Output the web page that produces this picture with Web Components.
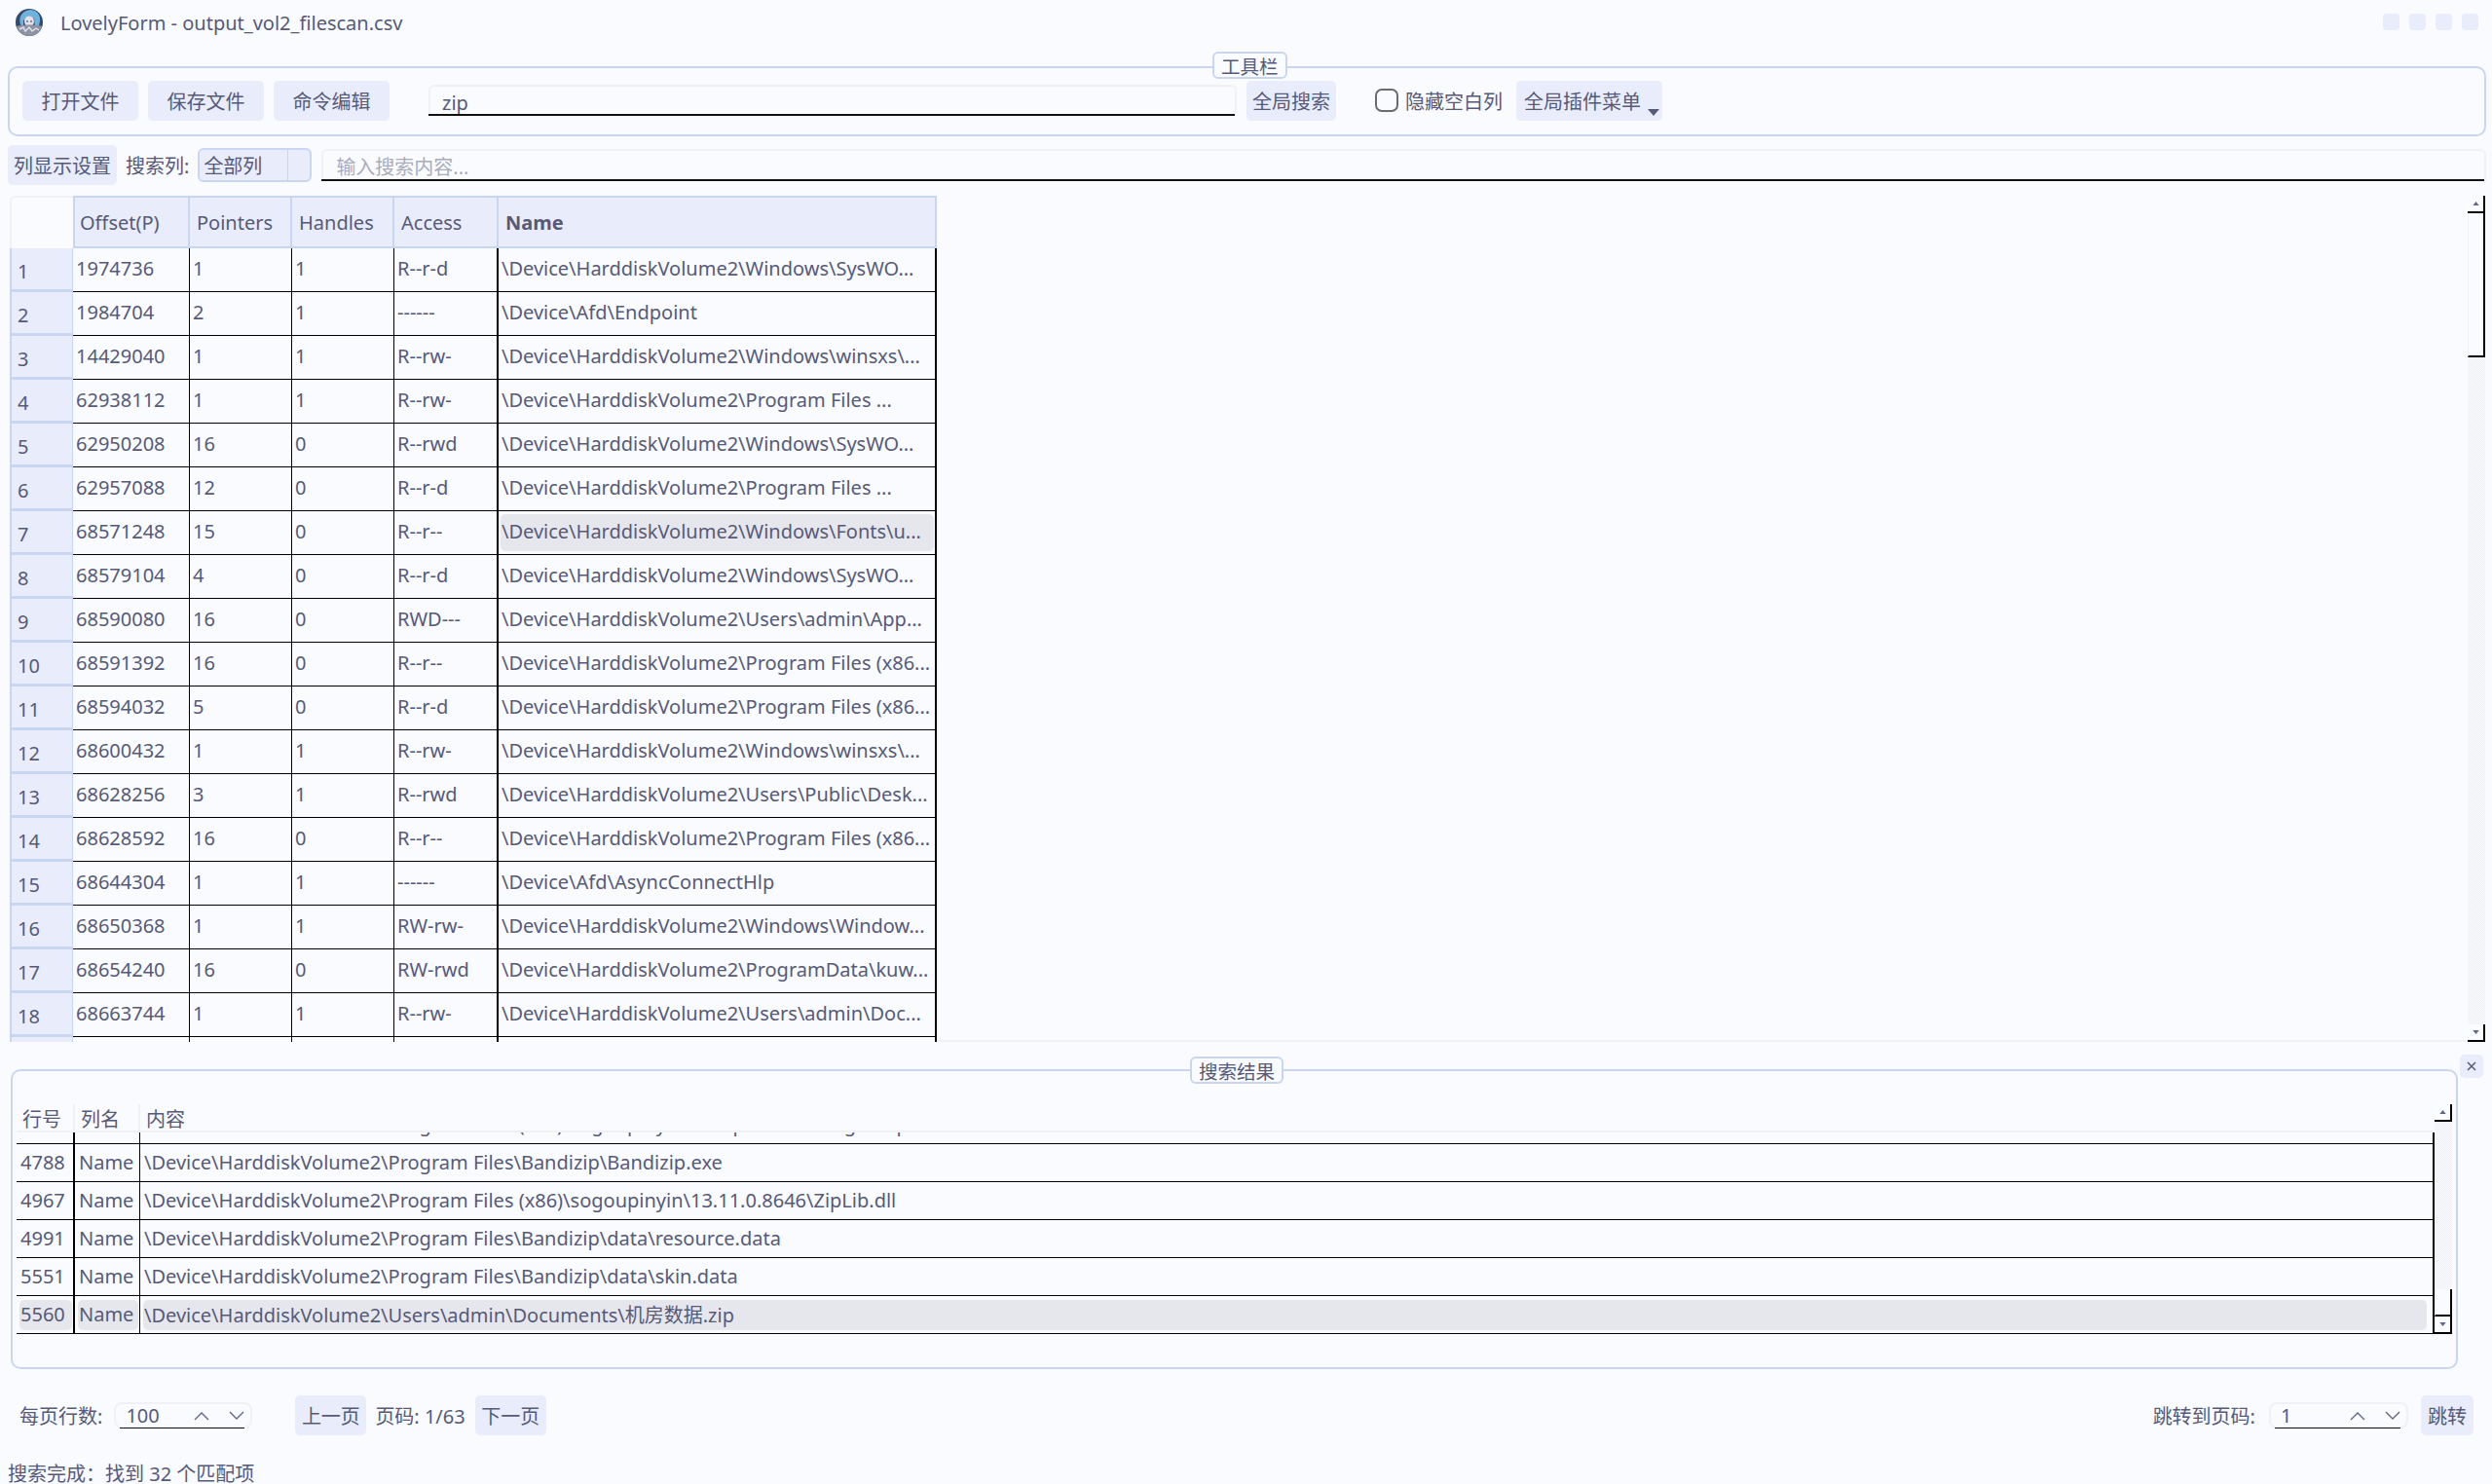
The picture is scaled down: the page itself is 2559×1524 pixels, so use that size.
<!DOCTYPE html>
<html lang="zh">
<head>
<meta charset="utf-8">
<title>LovelyForm</title>
<style>
  html, body { margin: 0; height: 100%; background: #f9fbff; overflow: hidden; }
  body { font: 20px "Noto Sans", "Noto Sans CJK SC", sans-serif; color: #565a78; }
  lf-app { height: 100vh; }
</style>
</head>
<body>
<lf-app></lf-app>
<script>
// datos de la tabla principal
const H = '\\Device\\HarddiskVolume2\\';
const FILAS = [
  ['1974736','1','1','R--r-d',H+'Windows\\SysWO...'],
  ['1984704','2','1','------','\\Device\\Afd\\Endpoint'],
  ['14429040','1','1','R--rw-',H+'Windows\\winsxs\\...'],
  ['62938112','1','1','R--rw-',H+'Program Files ...'],
  ['62950208','16','0','R--rwd',H+'Windows\\SysWO...'],
  ['62957088','12','0','R--r-d',H+'Program Files ...'],
  ['68571248','15','0','R--r--',H+'Windows\\Fonts\\u...'],
  ['68579104','4','0','R--r-d',H+'Windows\\SysWO...'],
  ['68590080','16','0','RWD---',H+'Users\\admin\\App...'],
  ['68591392','16','0','R--r--',H+'Program Files (x86...'],
  ['68594032','5','0','R--r-d',H+'Program Files (x86...'],
  ['68600432','1','1','R--rw-',H+'Windows\\winsxs\\...'],
  ['68628256','3','1','R--rwd',H+'Users\\Public\\Desk...'],
  ['68628592','16','0','R--r--',H+'Program Files (x86...'],
  ['68644304','1','1','------','\\Device\\Afd\\AsyncConnectHlp'],
  ['68650368','1','1','RW-rw-',H+'Windows\\Window...'],
  ['68654240','16','0','RW-rwd',H+'ProgramData\\kuw...'],
  ['68663744','1','1','R--rw-',H+'Users\\admin\\Doc...'],
  ['','','','','']
];
const RESULTADOS = [
  ['4621','Name',H+'Program Files (x86)\\sogoupinyin\\Components\\Plugin\\ZipLib.dll'],
  ['4788','Name',H+'Program Files\\Bandizip\\Bandizip.exe'],
  ['4967','Name',H+'Program Files (x86)\\sogoupinyin\\13.11.0.8646\\ZipLib.dll'],
  ['4991','Name',H+'Program Files\\Bandizip\\data\\resource.data'],
  ['5551','Name',H+'Program Files\\Bandizip\\data\\skin.data'],
  ['5560','Name',H+'Users\\admin\\Documents\\机房数据.zip']
];

const esc = s => s.replace(/&/g, '&amp;').replace(/</g, '&lt;');

class LfButton extends HTMLElement {
  constructor() {
    super();
    this.attachShadow({ mode: 'open' }).innerHTML = `
      <style>
        :host { display: inline-flex; align-items: center; justify-content: center; box-sizing: border-box;
                height: 41px; background: #e9edfb; border-radius: 5px; white-space: nowrap; flex: none; }
      </style><slot></slot>`;
  }
}
customElements.define('lf-button', LfButton);

class LfInput extends HTMLElement {
  constructor() {
    super();
    const ph = this.getAttribute('placeholder') || '';
    this.attachShadow({ mode: 'open' }).innerHTML = `
      <style>
        :host { display: flex; align-items: center; box-sizing: border-box; min-width: 0;
                border: 2px solid #eff1f7; border-bottom: 0; border-radius: 6px 6px 0 0; position: relative; }
        span { flex: 1; white-space: nowrap; }
        .ph { color: #a9acbb; }
        i { position: absolute; left: -2px; right: 0; bottom: 0; height: 2px; background: #111; }
      </style><span class="${ph ? 'ph' : ''}">${ph || '<slot></slot>'}</span><i></i>`;
  }
}
customElements.define('lf-input', LfInput);

// cuadro con titulo encima del borde
class LfGroup extends HTMLElement {
  constructor() {
    super();
    const titulo = this.getAttribute('titulo');
    this.attachShadow({ mode: 'open' }).innerHTML = `
      <style>
        :host { display: block; box-sizing: border-box; position: relative;
                border: 2px solid #c9d6f1; border-radius: 10px; }
        .tag { position: absolute; top: var(--tag-top); left: var(--tag-x); height: 28px; padding: 0 7px;
               box-sizing: border-box; display: flex; align-items: center; background: #f9fbff;
               border: 2px solid #c9d6f1; border-radius: 6px; font-size: 19.5px; white-space: nowrap; }
      </style><div class="tag">${titulo}</div><slot></slot>`;
  }
}
customElements.define('lf-group', LfGroup);

// barra de desplazamiento estilo clasico
class LfScrollbar extends HTMLElement {
  constructor() {
    super();
    const thumbTop = +this.getAttribute('thumb-top');
    const thumbH = +this.getAttribute('thumb-height');
    const flecha = d => `<svg width="7" height="4" viewBox="0 0 8 5"><path d="${d}" fill="#62668a"/></svg>`;
    this.attachShadow({ mode: 'open' }).innerHTML = `
      <style>
        :host { display: flex; flex-direction: column; width: 18px; flex: none; box-sizing: border-box; }
        .btn { height: 18px; flex: none; box-sizing: border-box; display: flex; align-items: center; justify-content: center;
               border-right: 2px solid #000; border-bottom: 2px solid #000; background: #fbfcff; }
        .track { flex: 1; min-height: 0; display: flex; flex-direction: column;
                 background: repeating-conic-gradient(#eef0f6 0 25%, #f9fbff 0 50%) 0 0 / 2px 2px; }
        .thumb { margin-top: ${thumbTop}px; height: ${thumbH}px; box-sizing: border-box; background: #f9fbff;
                 border-right: 2px solid #000; border-bottom: 2px solid #000; border-left: 1px solid #f0f2f8; }
      </style>
      <div class="btn">${flecha('M4 0 L8 5 H0 Z')}</div>
      <div class="track"><div class="thumb"></div></div>
      <div class="btn">${flecha('M0 0 H8 L4 5 Z')}</div>`;
  }
}
customElements.define('lf-scrollbar', LfScrollbar);

class LfSpin extends HTMLElement {
  constructor() {
    super();
    this.attachShadow({ mode: 'open' }).innerHTML = `
      <style>
        :host { display: flex; align-items: center; box-sizing: border-box; height: 27px; flex: none; position: relative;
                border: 2px solid #eff1f7; border-radius: 8px; padding: 0 6px 0 10px; }
        span { flex: 1; }
        svg { width: 16px; height: 10px; fill: none; stroke: #62668a; stroke-width: 1.4; margin-left: 20px; }
        i { position: absolute; left: 4px; right: 6px; bottom: -2px; height: 1px; background: #111; }
      </style>
      <span><slot></slot></span>
      <svg viewBox="0 0 16 10"><path d="M1 9 L8 2 L15 9"/></svg>
      <svg viewBox="0 0 16 10"><path d="M1 1 L8 8 L15 1"/></svg>
      <i></i>`;
  }
}
customElements.define('lf-spin', LfSpin);

class LfTitlebar extends HTMLElement {
  constructor() {
    super();
    this.attachShadow({ mode: 'open' }).innerHTML = `
      <style>
        :host { display: flex; align-items: center; height: 46px; padding: 0 14px 0 15px; flex: none; }
        svg { width: 30px; height: 30px; flex: none; }
        .t { margin-left: 17px; flex: 1; white-space: nowrap; }
        .w { display: flex; gap: 10px; margin-bottom: 1px; }
        .w i { width: 17px; height: 17px; border-radius: 4px; background: #e9edfb; }
      </style>
      <svg viewBox="0 0 30 30">
        <circle cx="15" cy="15" r="14" fill="#34496b"/>
        <path d="M6 17 C3 6 12 2 17 2 C25 3 28 10 25 18 L21 20 L20 11 C16 9 12 10 9 13 L9 20 Z" fill="#6fb2dc"/>
        <ellipse cx="15" cy="14" rx="5" ry="5.5" fill="#eadfe4"/>
        <circle cx="13" cy="14" r="1" fill="#3f78b0"/><circle cx="17" cy="14" r="1" fill="#3f78b0"/>
        <path d="M2 19 C8 17 22 17 28 19 C26 26 20 29 15 29 C10 29 4 26 2 19 Z" fill="#8d93a3"/>
        <path d="M5 22 L9 20 L11 24 L15 20 L18 24 L22 21 L25 23" fill="none" stroke="#dfe3ea" stroke-width="1.4"/>
      </svg>
      <div class="t"><slot></slot></div>
      <div class="w"><i></i><i></i><i></i><i></i></div>`;
  }
}
customElements.define('lf-titlebar', LfTitlebar);

class LfTable extends HTMLElement {
  constructor() {
    super();
    const cabecera = ['Offset(P)','Pointers','Handles','Access','Name'];
    const cab = cabecera.map((c, i) => `<div class="hd${i === 4 ? ' b' : ''}">${c}</div>`).join('');
    const filas = FILAS.map((f, n) => `
      <div class="rh">${f[0] ? n + 1 : ''}</div>
      ${f.map((v, i) => `<div class="c${i >= 3 ? ' g2' : ''}"><span class="${n === 6 && i === 4 ? 'sel' : ''}">${esc(v)}</span></div>`).join('')}`).join('');
    this.attachShadow({ mode: 'open' }).innerHTML = `
      <style>
        :host { display: block; overflow: hidden; flex: 1; min-width: 0; }
        .g { display: grid; grid-template-columns: 65px 120px 105px 105px 107px 450px; grid-template-rows: 54px; grid-auto-rows: 45px; width: max-content; }
        .corner { border: 2px solid #eff1f7; border-right: 0; border-bottom: 0; border-radius: 6px 0 0 0; }
        .hd { box-sizing: border-box; background: #e9edfb; display: flex; align-items: center; padding: 0 0 0 7px;
              border: 2px solid #c9d6f1; border-left: 0; white-space: nowrap; }
        .hd:nth-child(2) { border-left: 2px solid #c9d6f1; padding-left: 5px; }
        .b { font-weight: 700; }
        .rh { box-sizing: border-box; background: #e9edfb; border-left: 2px solid #c9d6f1; border-bottom: 3px solid #c9d6f1;
              border-right: 1px solid #c9d6f1; padding: 5px 0 0 6px; display: flex; align-items: center; }
        .c { box-sizing: border-box; border-right: 1px solid #000; border-bottom: 1px solid #000; display: flex; padding: 3px 1px 3px 2px; min-width: 0; }
        .g2 { border-right-width: 2px; }
        .c span { flex: 1; display: flex; align-items: center; padding: 0 0 4px 1px; border-radius: 5px; white-space: nowrap; overflow: hidden; }
        .c span.sel { background: #e6e7ec; }
      </style>
      <div class="g"><div class="corner"></div>${cab}${filas}</div>`;
  }
}
customElements.define('lf-table', LfTable);

class LfResults extends HTMLElement {
  constructor() {
    super();
    const filas = RESULTADOS.map((f, n) => f.map(v =>
      `<div class="c"><span class="${n === 5 ? 'sel' : ''}">${esc(v)}</span></div>`).join('')).join('');
    this.attachShadow({ mode: 'open' }).innerHTML = `
      <style>
        :host { display: flex; flex-direction: column; flex: 1; min-width: 0; height: 236px; }
        .head, .rows { display: grid; grid-template-columns: 60px 67px 1fr; }
        .head { height: 29px; box-sizing: border-box; border-bottom: 2px solid #eff1f7; }
        .head div { padding: 0 0 0 6px; display: flex; align-items: center; border-right: 2px solid #eff1f7; }
        .head div:last-child { border-right: 0; }
        .scroll { flex: 1; min-height: 0; overflow: hidden; border-right: 2px solid #000; }
        .rows { grid-auto-rows: 39px; margin-top: -27px; }
        .c { box-sizing: border-box; border-bottom: 1px solid #000; border-right: 1px solid #000; display: flex; padding: 4px 1px 3px 3px; min-width: 0; }
        .c:nth-child(3n+1) { border-right-width: 2px; }
        .c:nth-child(3n) { border-right: 0; padding-right: 6px; }
        .c span { flex: 1; display: flex; align-items: center; padding: 0 0 2px 1px; border-radius: 5px; white-space: nowrap; }
        .c span.sel { background: #e6e7ec; }
      </style>
      <div class="head"><div>行号</div><div>列名</div><div>内容</div></div>
      <div class="scroll"><div class="rows">${filas}</div></div>`;
  }
}
customElements.define('lf-results', LfResults);

class LfApp extends HTMLElement {
  constructor() {
    super();
    this.attachShadow({ mode: 'open' }).innerHTML = `
      <style>
        :host { display: flex; flex-direction: column; box-sizing: border-box; height: 100%; }
        lf-group.tool { margin: 22px 6px 0 8px; height: 72px; --tag-x: 1235px; --tag-top: -17px; }
        .toolrow { display: flex; align-items: center; height: 100%; padding: 0 0 0 13px; margin-top: -1px; }
        .toolrow lf-button { margin-right: 10px; }
        .b119 { width: 119px; }
        .search { flex: none; width: 830px; height: 32px; margin: 0 10px 0 40px; padding: 2px 0 0 12px; }
        .check { display: flex; align-items: center; margin-left: 40px; width: 145px; white-space: nowrap; flex: none; }
        .check input { appearance: none; width: 24px; height: 24px; margin: 0 7px 0 0; border: 2px solid #6b6b6b; border-radius: 7px; flex: none; }
        .menu { width: 150px; justify-content: flex-start; padding-left: 8px; position: relative; }
        .menu svg { position: absolute; right: 3px; bottom: 5px; }
        .row2 { display: flex; align-items: center; height: 41px; margin: 9px 6px 0 8px; flex: none; }
        .combo { width: 117px; height: 35px; box-sizing: border-box; margin: 0 10px 0 9px; flex: none; background: #e9edfb;
                 border: 2px solid #c9d6f1; border-radius: 6px; display: flex; align-items: center; padding-left: 4px; position: relative; }
        .combo i { position: absolute; right: 22px; top: 0; bottom: 0; width: 1px; background: #c9d6f1; }
        .filter { flex: 1; height: 33px; padding-left: 13px; }
        .tabla { display: flex; flex: none; height: 869px; margin: 11px 7px 0 10px; }
        .sep { height: 2px; flex: none; margin: -2px 25px 0 962px; background: #eff1f7; }
        .res { display: flex; align-items: flex-start; flex: none; padding: 13px 9px 0 11px; }
        lf-group.rg { flex: 1; height: 308px; margin-top: 15px; --tag-x: 1209px; --tag-top: -15px; }
        .rgin { display: flex; padding: 34px 4px 0 4px; }
        .x { width: 24px; height: 24px; margin-left: 2px; background: #e9edfb; border-radius: 5px; display: flex; align-items: center; justify-content: center; flex: none; }
        .pager { display: flex; align-items: center; height: 41px; margin-top: 27px; padding: 0 19px 0 20px; flex: none; white-space: nowrap; }
        .pager .grow { flex: 1; }
        .pb { width: 73px; }
        .status { margin: 30px 0 0 8px; white-space: nowrap; line-height: 20px; }
      </style>
      <lf-titlebar>LovelyForm - output_vol2_filescan.csv</lf-titlebar>
      <lf-group class="tool" titulo="工具栏">
        <div class="toolrow">
          <lf-button class="b119">打开文件</lf-button>
          <lf-button class="b119">保存文件</lf-button>
          <lf-button class="b119" style="margin-right:0">命令编辑</lf-button>
          <lf-input class="search">zip</lf-input>
          <lf-button style="width:92px;margin-right:0">全局搜索</lf-button>
          <label class="check"><input type="checkbox">隐藏空白列</label>
          <lf-button class="menu">全局插件菜单<svg width="12" height="7" viewBox="0 0 12 7"><path d="M0 0 H12 L6 7 Z" fill="#565a78"/></svg></lf-button>
        </div>
      </lf-group>
      <div class="row2">
        <lf-button style="width:112px">列显示设置</lf-button>
        <span style="margin-left:9px;white-space:nowrap">搜索列:</span>
        <div class="combo">全部列<i></i></div>
        <lf-input class="filter" placeholder="输入搜索内容..."></lf-input>
      </div>
      <div class="tabla">
        <lf-table></lf-table>
        <lf-scrollbar thumb-top="0" thumb-height="148"></lf-scrollbar>
      </div>
      <div class="sep"></div>
      <div class="res">
        <lf-group class="rg" titulo="搜索结果">
          <div class="rgin">
            <lf-results></lf-results>
            <lf-scrollbar thumb-top="172" thumb-height="28"></lf-scrollbar>
          </div>
        </lf-group>
        <div class="x"><svg width="12" height="12" viewBox="0 0 12 12"><path d="M2 2 L10 10 M10 2 L2 10" stroke="#565a78" stroke-width="1.5"/></svg></div>
      </div>
      <div class="pager">
        <span>每页行数:</span>
        <lf-spin style="width:142px;margin:0 44px 0 12px">100</lf-spin>
        <lf-button class="pb">上一页</lf-button>
        <span style="margin:0 10px 0 9px">页码: 1/63</span>
        <lf-button class="pb">下一页</lf-button>
        <span class="grow"></span>
        <span>跳转到页码:</span>
        <lf-spin style="width:143px;margin:0 13px 0 14px">1</lf-spin>
        <lf-button style="width:54px">跳转</lf-button>
      </div>
      <div class="status">搜索完成：找到 32 个匹配项</div>`;
  }
}
customElements.define('lf-app', LfApp);
</script>
</body>
</html>
